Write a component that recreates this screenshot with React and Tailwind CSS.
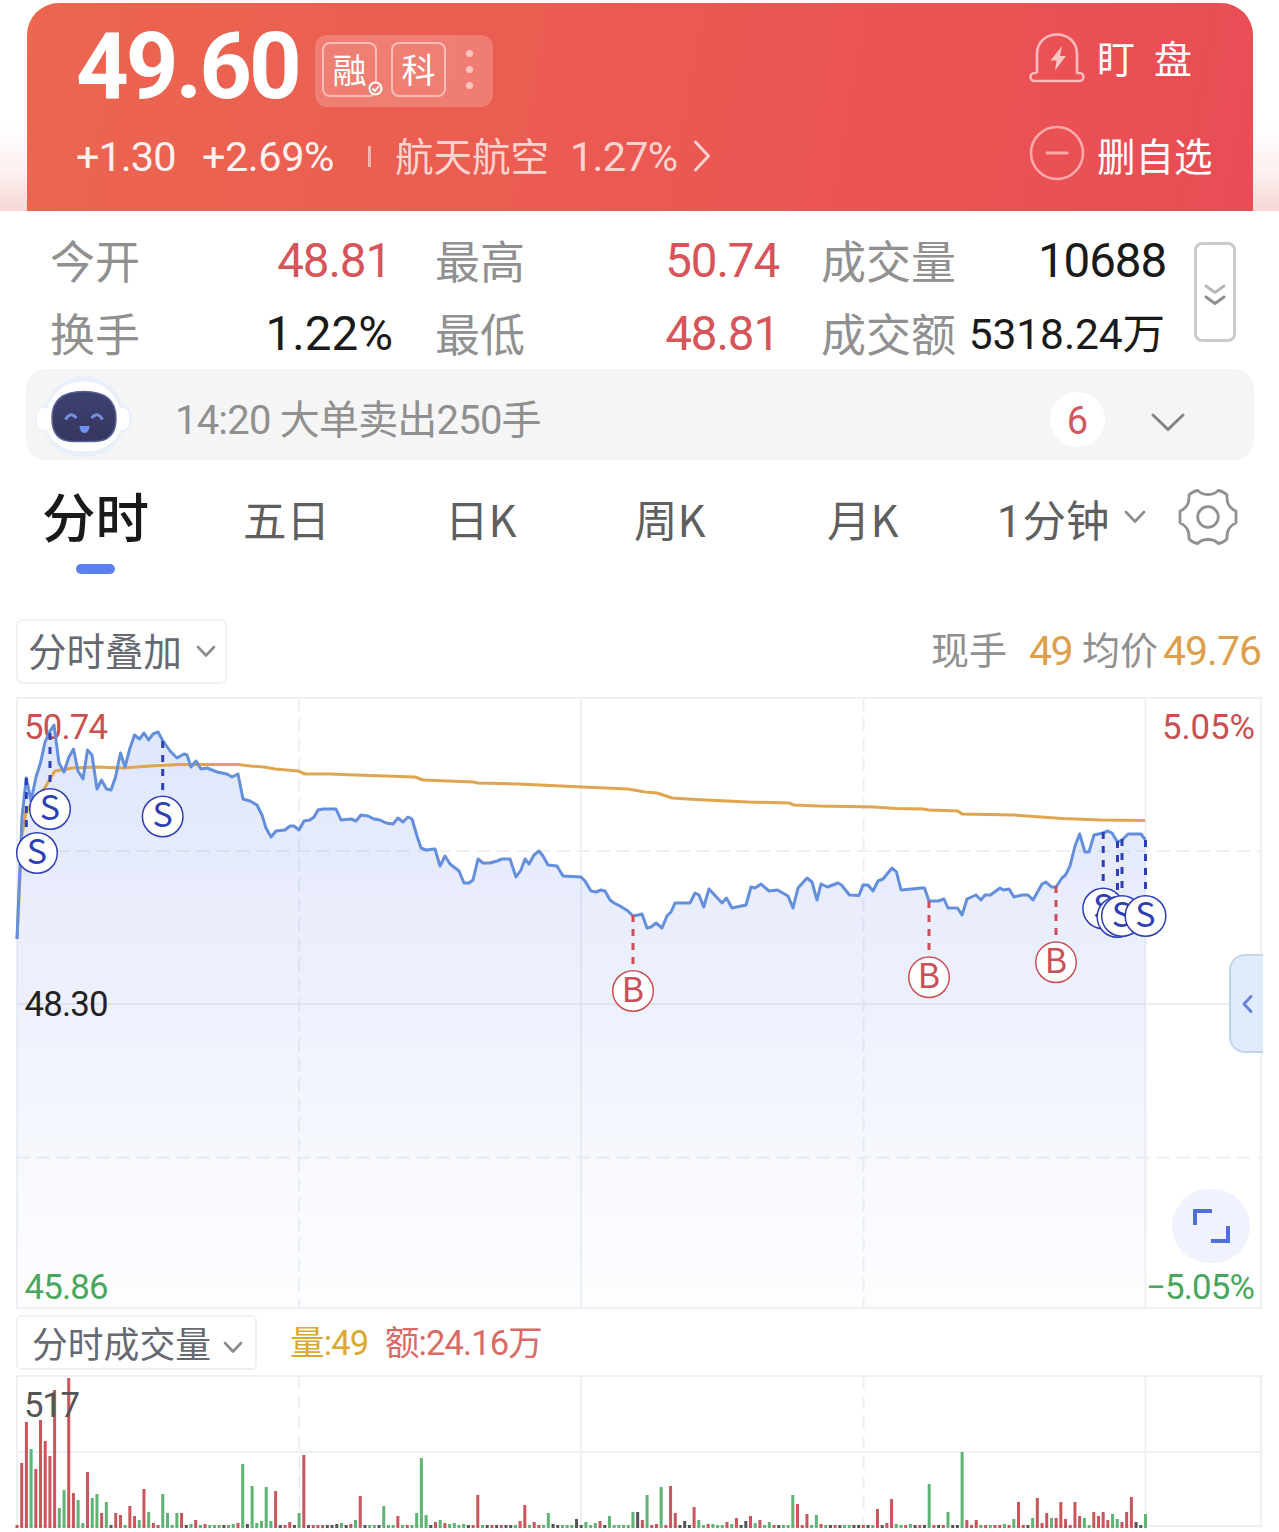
import React from "react";

const BARS =
  "r3 r65 r106 g79 r59 r108 r87 r72 r138 g20 g38 r150 r35 g28 g5 r56 g30 g34 r15 g26 k3 r15 r13 g3 r22 r12 g8 r39 g16 r5 r3 g34 g15 g3 g15 r15 k3 g4 r8 g3 r4 g3 g3 g3 k3 g3 g4 r5 g64 k4 g42 g5 g7 g41 g7 r37 k3 r3 r6 k3 g15 r73 k3 r3 r3 r3 k3 k3 k4 g5 k3 r4 g8 r32 k3 g3 g3 k3 g22 g3 g3 r12 g3 r3 g3 g15 g70 g13 k3 r6 g8 r5 g4 g5 g3 g4 k3 r3 r33 g3 k3 r3 k3 r3 k3 k3 g3 r7 r23 g3 r6 r3 g3 g15 k4 k3 g3 g3 g3 k9 k3 g6 g3 g5 r7 k3 g12 g3 g3 g3 g3 g16 k16 r8 g33 r3 r4 g41 r3 r42 r15 k3 k7 k3 r21 g8 g3 r4 g4 g3 g3 r6 g4 r10 k3 k7 r12 g5 r8 g3 g6 r3 k3 g3 g3 g33 r24 r3 r14 g3 g13 r4 g3 k3 r3 k3 g3 g3 k3 k3 r3 k3 g3 r19 k3 r5 r29 g4 g3 r3 g4 k3 r3 k3 g44 r3 k3 r3 g16 k3 k3 g76 r8 r3 r8 g3 r3 g3 r3 r3 g4 r3 g9 r26 r3 k3 g10 r30 r5 r15 g10 r10 r26 r9 r3 r26 r12 g10 g3 r16 r12 r16 r8 g14 g9 r6 r16 r31 k6 k3 g14".split(
    " "
  );
const BAR_COLORS = { r: "#c9565c", g: "#5fb374", k: "#555555" };

const PRICE =
  "17,939 22,817 26.3,778 31,801 36,777 40.5,763 45,742 50,731 54,725 59,763 64,772 68.5,758 73.5,749 78,771 83,779 87.5,750 92,755 97,789 101.5,780 106.5,789 111,790 115.5,777 120.5,753 125,767 130,748 134.5,735 139.5,739 144,733 148.5,740 153,734 158,732 163,741 170,751 177,758 184,754 187,755 191,767 196,761 201,769 207,768 217,772 227,774 232,777 238,774 243,799 250,801 257,805 262,815 266,828 271,837 276,831 285,830 290,826 294,826 299,830 304,821 310,820 314,817 318,810 323,809 336,809 341,820 351,819 356,821 361,815 368,816 374,819 380,820 386,823 393,824 398,818 403,822 408,817 412,819 417,836 421,848 426,850 435,849 440,866 445,856 450,864 459,871 464,883 469,883 473,880 478,859 483,863 490,863 497,861 502,859 510,859 516,877 521,870 525,859 529,864 534,855 539,851 543,856 548,865 557,866 563,876 581,877 585,881 591,891 596,892 601,890 605,891 610,900 614,903 620,906 628,911 633,916 638,915 642,914 647,928 651,927 656,923 662,928 667,916 671,912 675,903 690,903 695,893 699,895 703.7,907 709,889 722,903 726.5,898 732,908 746,905 751,887 755,888 761,884 769,891 777.5,890 788,896 793,908 798,888 807,878 812,882 817,900 821,884 827.5,887 838,883 841.5,885 849.5,895 859,895.5 863,885 868,885 873,891 878,881 883,879 892,868 896.5,872 901,890 912,889 921.5,888 924.5,888 929,901 938,901 944,899 948,908 957.5,908 962,915 967,899 976,895 981,900 985,895 990.5,895 1000,888 1003.5,890 1009,889 1014,897 1022,895 1028,895 1033,900 1042,884 1046,882 1051.5,887 1056,887 1062,878 1065.5,875 1070,866 1075,846 1079.6,834 1085,852 1089,852 1094,835 1103,833 1107.7,831 1112,833 1117.5,842 1122,840 1128,834 1141,834 1145.5,840";
const AVERAGE =
  "17,939 22,835 26,812 33,802 44,789 50,779 55,771 73,768 97,767 123,768 150,766 180,764.5 238,764.5 250,766 264,767 275,769 298,771 305,774 330,774 355,775 415,777 423,780 473,782 478,783 518,784 583,787 628,789 645,792 657,793 672,798 700,799.7 748,802 789,803 794,805 818,806 874,807 896,808.5 923,809 929,810 958,811 962,814 1014,815 1062,818.5 1100,820 1145,820.5";

const TRADES = [
  { t: "S", x: 26.3, y: 778, cx: 37, cy: 853 },
  { t: "S", x: 50, y: 733, cx: 50, cy: 809 },
  { t: "S", x: 162.7, y: 741, cx: 162.7, cy: 816.5 },
  { t: "B", x: 633, y: 915, cx: 633, cy: 991 },
  { t: "B", x: 929, y: 901, cx: 929, cy: 977.3 },
  { t: "B", x: 1056, y: 886, cx: 1056, cy: 962.3 },
  { t: "S", x: 1103.2, y: 832, cx: 1103.2, cy: 908.5 },
  { t: "S", x: 1117.5, y: 841, cx: 1117.5, cy: 917 },
  { t: "S", x: 1122, y: 839, cx: 1122, cy: 916 },
  { t: "S", x: 1145.5, y: 840, cx: 1145.5, cy: 916 },
];

const NUM = "font-['Roboto','Noto_Sans_CJK_SC',sans-serif]";

function Chevron({ className, w, h, sw = 2.6, color }) {
  return (
    <svg className={className} width={w} height={h} viewBox={`0 0 ${w} ${h}`} fill="none">
      <path
        d={`M2 2L${w / 2} ${h - 2.5}L${w - 2} 2`}
        stroke={color}
        strokeWidth={sw}
        strokeLinecap="round"
        strokeLinejoin="round"
      />
    </svg>
  );
}

function SirenIcon() {
  return (
    <svg width="56" height="52" viewBox="0 0 56 52" fill="none" stroke="#ffb9bb" strokeWidth="2.6">
      <path d="M8 41V22C8 10 17 2.500 28 2.500S48 10 48 22V41H50.500A4 4 0 0 1 50.500 49H5.500A4 4 0 0 1 5.500 41H8" strokeLinejoin="round" />
      <path d="M33 14L21.500 28.500H27.500L26 38.500L37 24H31Z" fill="#ffc4c5" stroke="none" />
    </svg>
  );
}

function MinusIcon() {
  return (
    <svg width="56" height="56" viewBox="0 0 56 56" fill="none" stroke="#ffa9ab" strokeWidth="2.6">
      <circle cx="28" cy="28" r="26" />
      <path d="M18 28H38" strokeWidth="3" strokeLinecap="round" />
    </svg>
  );
}

function RobotIcon() {
  return (
    <svg width="100" height="88" viewBox="0 0 100 88">
      <defs>
        <linearGradient id="face" x1="0" y1="0" x2="0" y2="1">
          <stop offset="0" stopColor="#3d4270" />
          <stop offset="1" stopColor="#36365f" />
        </linearGradient>
      </defs>
      <path
        d="M50 5.500C68 5.500 83 16 88 34Q98 37 98 48T88 62C83 77 68 86 50 86S17 77 12 62Q1 59 1 48T12 34C17 16 32 5.500 50 5.500Z"
        fill="#e9f0fc"
      />
      <rect x="3" y="37" width="92" height="22" rx="7" fill="#fff" />
      <path
        d="M49.500 10.500C70 10.500 84 24 88 46C89 68 72 80.500 49.500 80.500S10 68 11 46C15 24 29 10.500 49.500 10.500Z"
        fill="#fff"
      />
      <path
        d="M49.500 20.500C68 20.500 82 27 82 47C82 61 76 70.500 60 70.500H39C23 70.500 18 61 18 47C18 27 31 20.500 49.500 20.500Z"
        fill="url(#face)"
        stroke="#5a6096"
        strokeWidth="1.500"
      />
      <path d="M31.500 48.500Q36.500 40 42.500 47M57.500 47Q63.500 40 68.500 48.500" fill="none" stroke="#7490e2" strokeWidth="3" />
      <path d="M45.500 55H55.500Q55 62 50.500 62T45.500 55Z" fill="#6f92f2" />
    </svg>
  );
}

function GearIcon() {
  return (
    <svg width="62" height="60" viewBox="0 0 62 60" fill="none" stroke="#919191" strokeWidth="2.800" strokeLinejoin="round">
      <path d="M21 3.500Q24 7.500 31 7.500T41 3.500Q46 4 50 8Q49.500 15 52.500 19T59 24V36Q55.500 37 52.500 41T50 52Q46 56 41 56.500Q38 52.500 31 52.500T21 56.500Q16 56 12 52Q12.500 45 9.500 41T3 36V24Q6.500 23 9.500 19T12 8Q16 4 21 3.500Z" />
      <circle cx="31" cy="30" r="10.300" />
    </svg>
  );
}

function Header() {
  return (
    <header className="h-[211px] bg-[linear-gradient(to_bottom,#ffffff_58%,#fdf0f0_82%,#f8d6d6)] pt-[3px] pr-[26px] pl-[27px]">
      <div className="flex h-[208px] justify-between rounded-t-[32px] bg-[linear-gradient(100deg,#ec6650_0%,#eb5c51_40%,#e94c55_100%)]">
        <div className="pl-[49px]">
          <div className="flex h-[104px]">
            <div className={`${NUM} mt-[10px] w-[239px] text-[92px] leading-[108px] font-bold tracking-[-3px] text-white`}>
              49.60
            </div>
            <div className="mt-[32px] flex h-[72px] w-[178px] items-center rounded-[12px] bg-white/20 pb-[3px] pl-[7px]">
              <div className="relative flex size-[55px] items-center justify-center rounded-[8px] border-2 border-[#f9bcb7] pb-px text-[34px] leading-none text-white">
                融
                <svg className="absolute -right-[8px] -bottom-[1px]" width="15" height="15" viewBox="0 0 15 15" fill="#ec7d74" stroke="#fff" strokeWidth="2">
                  <circle cx="7.500" cy="7.500" r="6" />
                  <path d="M4.500 7.500L7 10L11 5" fill="none" />
                </svg>
              </div>
              <div className="ml-[14px] flex size-[55px] items-center justify-center rounded-[8px] border-2 border-[#f9bcb7] pb-px text-[34px] leading-none text-white">
                科
              </div>
              <div className="ml-[20px] flex flex-col gap-[9px]">
                <i className="size-[7px] rounded-full bg-[#f9c4c0]" />
                <i className="size-[7px] rounded-full bg-[#f9c4c0]" />
                <i className="size-[7px] rounded-full bg-[#f9c4c0]" />
              </div>
            </div>
          </div>
          <div className="flex h-[98px] items-center leading-none text-[#fff1ef]">
            <span className={`${NUM} w-[126px] pt-px text-[41.500px] tracking-[-1px]`}>+1.30</span>
            <span className={`${NUM} w-[166px] pt-px text-[41.500px] tracking-[-0.500px]`}>+2.69%</span>
            <i className="h-[21px] w-[3px] bg-[#f8b5af]" />
            <span className="ml-[24px] w-[175px] pb-[4px] text-[38.500px] text-[#fcd3cf]">航天航空</span>
            <span className={`${NUM} w-[123px] pt-px text-[41.500px] tracking-[-0.800px] text-[#fcd3cf]`}>1.27%</span>
            <svg width="18" height="32" viewBox="0 0 18 32" fill="none" stroke="#fcd3cf" strokeWidth="3" strokeLinecap="round" strokeLinejoin="round">
              <path d="M2.500 2L15.500 16L2.500 30" />
            </svg>
          </div>
        </div>
        <div className="w-[224px] text-[38px] leading-none text-white">
          <div className="flex h-[110px] items-center">
            <SirenIcon />
            <span className="ml-[12px] w-[57px] pb-[3px]">盯</span>
            <span className="pb-[3px]">盘</span>
          </div>
          <div className="flex h-[80px] items-center">
            <MinusIcon />
            <span className="ml-[12px] pt-[3px] text-[38.500px]">删自选</span>
          </div>
        </div>
      </div>
    </header>
  );
}

function Stat({ label, value, tone }) {
  return (
    <div className="flex h-[73px] items-center justify-between whitespace-nowrap">
      <span className="pt-px text-[45px] leading-none text-[#909090]">{label}</span>
      <span className={`${NUM} leading-none ${tone}`}>{value}</span>
    </div>
  );
}

function Stats() {
  const red = "mr-[2px] pt-[7px] text-[47.500px] tracking-[-1.100px] text-[#d5555b]";
  return (
    <section className="flex h-[158px] pt-[11px] pl-[50px]">
      <div className="w-[343px]">
        <Stat label="今开" value="48.81" tone={red} />
        <Stat label="换手" value="1.22%" tone="pt-[7px] text-[47.500px] text-[#1a1a1a]" />
      </div>
      <div className="ml-[42px] w-[346px]">
        <Stat label="最高" value="50.74" tone={red} />
        <Stat label="最低" value="48.81" tone={red} />
      </div>
      <div className="ml-[40px] w-[346px]">
        <Stat label="成交量" value="10688" tone="mr-px pt-[7px] text-[47.500px] tracking-[-1.100px] text-[#1a1a1a]" />
        <Stat label="成交额" value="5318.24万" tone="mr-[2px] pt-[8px] text-[42.500px] tracking-[-0.100px] text-[#1a1a1a]" />
      </div>
      <div className="mt-[20px] ml-[27px] flex h-[100px] w-[42px] flex-col items-center justify-center rounded-[8px] border-3 border-[#cbcbcb] pt-[5px] pr-px">
        <Chevron w={22} h={11} color="#b8b8b8" sw={3} />
        <Chevron w={22} h={11} color="#8f8f8f" sw={3} />
      </div>
    </section>
  );
}

function NewsBar() {
  return (
    <section className="mr-[25px] ml-[26px] flex h-[91px] items-center rounded-[20px] bg-[#f5f5f5] pl-[8px]">
      <RobotIcon />
      <span className={`${NUM} ml-[41px] w-[875px] pt-[12px] text-[40px] leading-none tracking-[-0.800px] whitespace-nowrap text-[#909090]`}>
        14:20 大单卖出250手
      </span>
      <span className={`${NUM} mt-[9px] flex size-[55px] items-center justify-center rounded-full bg-white pt-[4px] text-[38px] leading-none text-[#cf5a5f]`}>
        6
      </span>
      <Chevron className="mt-[15px] ml-[46px]" w={34} h={19} color="#858585" sw={3} />
    </section>
  );
}

function Tabs() {
  const tab = "mt-[2px] text-[43.500px] leading-[60px] whitespace-nowrap text-[#5f5f5f]";
  return (
    <nav className="flex h-[159px] pt-[27px] pl-[42px]">
      <div className="w-[201px]">
        <div className="-mt-[2px] text-[53.500px] leading-[60px] font-medium text-[#1a1a1a]">分时</div>
        <div className="mt-[19px] ml-[34px] h-[10px] w-[39px] rounded-full bg-[#5b7fec]" />
      </div>
      <div className={`${tab} w-[202px]`}>五日</div>
      <div className={`${tab} w-[189px]`}>日K</div>
      <div className={`${tab} w-[193px]`}>周K</div>
      <div className={`${tab} w-[170px]`}>月K</div>
      <div className={`${tab} w-[126px]`}>
        <span className="font-['Roboto'] tracking-[1px]">1</span>分钟
      </div>
      <Chevron className="mt-[23px] ml-px" w={22} h={14} color="#8c8c8c" />
      <div className="ml-[31px]">
        <GearIcon />
      </div>
    </nav>
  );
}

function Toolbar() {
  return (
    <div className="flex h-[78px] items-start justify-between pr-[18px] pl-[16px]">
      <div className="flex h-[65px] w-[211px] items-center rounded-[7px] border-2 border-[#f0f1f4] pl-[10px] text-[38.500px] leading-none text-[#666972]">
        <span className="w-[168px] pb-[4px]">分时叠加</span>
        <Chevron w={20} h={13} color="#8c8c8c" />
      </div>
      <div className="flex h-[58px] items-center leading-none whitespace-nowrap text-[38px] text-[#909090]">
        <span className="w-[98px]">现手</span>
        <span className={`${NUM} w-[53px] pt-[6px] text-[41px] tracking-[-1.500px] text-[#dd9f4c]`}>49</span>
        <span className="w-[81px]">均价</span>
        <span className={`${NUM} pt-[6px] text-[41px] tracking-[-1px] text-[#dd9f4c]`}>49.76</span>
      </div>
    </div>
  );
}

function Grid({ top, bottom }) {
  return (
    <g stroke="#eef0f4" strokeWidth="2" fill="none">
      <path d={`M17 ${top}H1261V${bottom}H17Z`} />
      <path d={`M581 ${top}V${bottom}M1145.500 ${top}V${bottom}`} />
      <path d={`M299 ${top}V${bottom}M863.500 ${top}V${bottom}`} strokeDasharray="13 7" />
    </g>
  );
}

function PriceChart() {
  return (
    <div className="relative h-[612px]">
      <svg className="block" width="1279" height="612" viewBox="0 697 1279 612">
        <defs>
          <linearGradient id="area" gradientUnits="userSpaceOnUse" x1="0" y1="725" x2="0" y2="1308">
            <stop offset="0" stopColor="#4f74ec" stopOpacity="0.180" />
            <stop offset="0.500" stopColor="#5c78e8" stopOpacity="0.100" />
            <stop offset="1" stopColor="#7fa6ec" stopOpacity="0.020" />
          </linearGradient>
        </defs>
        <Grid top={698} bottom={1308} />
        <path d="M17 1004H1261" stroke="#eceef3" strokeWidth="2" />
        <path d="M17 851H1261M17 1157.500H1261" stroke="#eef0f4" strokeWidth="2" strokeDasharray="13 7" />
        <polygon points={`${PRICE} 1145.5,1308 17,1308`} fill="url(#area)" />
        <g className={NUM} fontSize="34.800">
          <text x="24" y="739" fill="#c9504f" textLength="84">50.74</text>
          <text x="24.500" y="1016" fill="#222" textLength="84">48.30</text>
          <text x="24.500" y="1299" fill="#48a75c" textLength="84">45.86</text>
          <text x="1162" y="739" fill="#c9504f" textLength="93">5.05%</text>
          <text x="1146" y="1299" fill="#48a75c" textLength="109">−5.05%</text>
        </g>
        <polyline points={AVERAGE} fill="none" stroke="#dfa54f" strokeWidth="3" strokeLinejoin="round" />
        <polyline points={PRICE} fill="none" stroke="#648fdc" strokeWidth="3" strokeLinejoin="round" />
        {TRADES.map((p, i) => {
          const line = p.t === "S" ? "#2e3fb4" : "#cb4f57";
          return (
            <g key={i}>
              <path d={`M${p.x} ${p.y}V${p.cy - 25}`} stroke={line} strokeWidth="3" strokeDasharray="7 7" />
              <circle cx={p.cx} cy={p.cy} r="20.300" fill="#fff" stroke={line} strokeWidth="1.500" />
              <text x={p.cx} y={p.cy + 10.5} textAnchor="middle" fontSize="34" fill={line}>
                {p.t}
              </text>
            </g>
          );
        })}
      </svg>
      <div className="absolute top-[257px] left-[1229px] flex h-[99px] w-[34px] items-center rounded-l-[16px] border-2 border-r-0 border-[#c3d4ee] bg-[#e0ebfc] pl-[10px]">
        <svg width="13" height="20" viewBox="0 0 13 20" fill="none" stroke="#6584da" strokeWidth="3" strokeLinecap="round" strokeLinejoin="round">
          <path d="M10 2.500L3 10L10 17.500" />
        </svg>
      </div>
      <div className="absolute top-[492px] left-[1172px] flex h-[74px] w-[78px] items-center justify-center rounded-full bg-[#f0f3fd]">
        <svg width="38" height="36" viewBox="0 0 38 36" fill="none" stroke="#4f6fe0" strokeWidth="4">
          <path d="M3 17V3H20M36 18V33H19" />
        </svg>
      </div>
    </div>
  );
}

function VolumeHeader() {
  return (
    <div className="flex h-[66px] items-start pt-[6px] pl-[16px]">
      <div className="flex h-[55px] w-[241px] items-center rounded-[5px] border-2 border-[#f0f1f4] pl-[14px] text-[35.800px] leading-none text-[#666972]">
        <span className="w-[191px] whitespace-nowrap">分时成交量</span>
        <Chevron className="mt-[9px]" w={20} h={13} color="#8c8c8c" />
      </div>
      <span className={`${NUM} ml-[33px] w-[95px] text-[34.500px] leading-[56px] tracking-[-0.800px] whitespace-nowrap text-[#d9aa31]`}>量:49</span>
      <span className={`${NUM} text-[34.500px] leading-[56px] tracking-[-0.900px] whitespace-nowrap text-[#da6a66]`}>额:24.16万</span>
    </div>
  );
}

function VolumeChart() {
  return (
    <svg className="block" width="1279" height="157" viewBox="0 1375 1279 157">
      <Grid top={1376} bottom={1526} />
      <path d="M17 1452H1261" stroke="#eef0f4" strokeWidth="2" />
      {BARS.map((b, i) => {
        const h = Number(b.slice(1));
        return <rect key={i} x={15.5 + i * 4.702} y={1528 - h} width="3" height={h} fill={BAR_COLORS[b[0]]} />;
      })}
      <text className={NUM} x="24" y="1417" fontSize="34.800" fill="#555" textLength="56">517</text>
    </svg>
  );
}

export default function App() {
  return (
    <main className="h-[1532px] w-[1279px] overflow-hidden bg-white font-['Noto_Sans_CJK_SC',sans-serif]">
      <Header />
      <Stats />
      <NewsBar />
      <Tabs />
      <Toolbar />
      <PriceChart />
      <VolumeHeader />
      <VolumeChart />
    </main>
  );
}
